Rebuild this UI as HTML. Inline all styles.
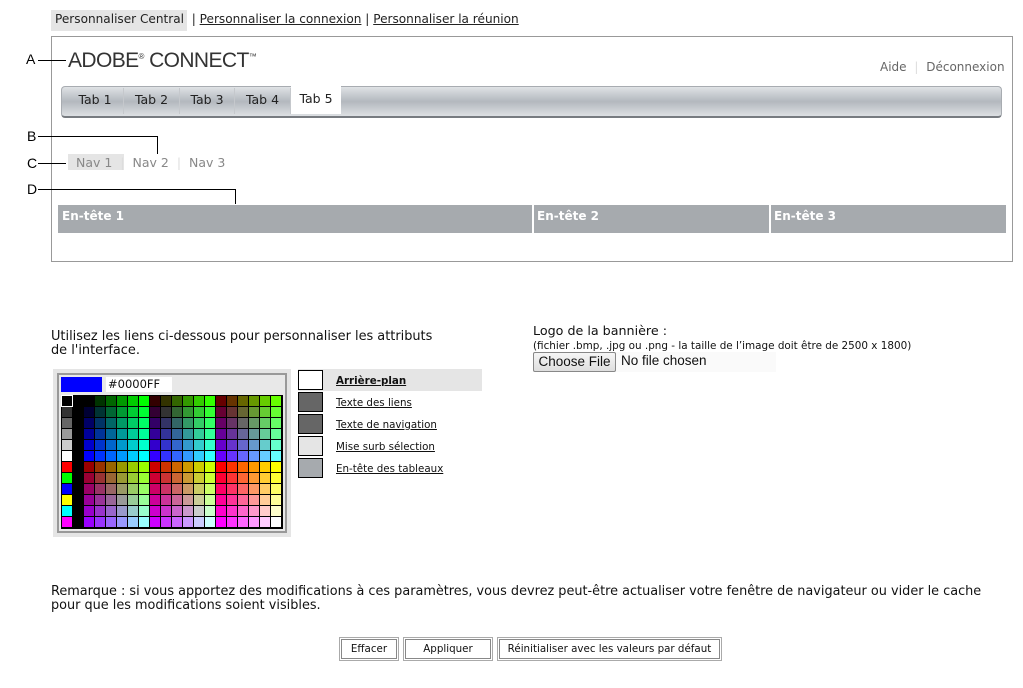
<!DOCTYPE html>
<html><head><meta charset="utf-8"><style>
*{margin:0;padding:0;box-sizing:border-box}
body{width:1023px;height:688px;background:#fff;font-family:"DejaVu Sans","Liberation Sans",sans-serif;color:#000;position:relative;overflow:hidden}
.a{position:absolute;white-space:nowrap}
u{text-decoration:underline}
.lbl{font-family:"Liberation Sans",sans-serif;font-size:14px;color:#000}
.ln{position:absolute;background:#000}
.tab{position:absolute;top:88px;height:26px;font-size:12.5px;line-height:22px;color:#222;text-align:center;border-right:1px solid #c5c8cc}
.sw{position:absolute;left:298px;width:25px;height:20px;border:1px solid #000}
.al{position:absolute;left:336px;font-size:10.3px;color:#111;text-decoration:underline}
.btn{position:absolute;top:637px;height:24px;border:1px solid #aaa;outline:1px solid #888;outline-offset:-3px;background:#fff;font-size:10.3px;line-height:23px;text-align:center;color:#111}
</style></head><body>
<div class="a" style="left:51px;top:10px;width:136px;height:21px;background:#e5e5e5"></div>
<div class="a" style="left:55px;top:12px;font-size:12.1px;color:#222">Personnaliser Central &nbsp;| <u>Personnaliser la connexion</u> | <u>Personnaliser la réunion</u></div>

<div class="a" style="left:51px;top:36px;width:962px;height:226px;border:1px solid #999"></div>
<div class="a" style="left:68px;top:49px;font-family:'Liberation Sans',sans-serif;font-size:21px;color:#333;letter-spacing:-0.6px">ADOBE<sup style="font-size:8px">®</sup> CONNECT<sup style="font-size:8px">™</sup></div>
<div class="a" style="left:880px;top:60px;font-size:12px;color:#666">Aide <span style="color:#ddd;margin:0 4px">|</span> Déconnexion</div>

<div class="a" style="left:61px;top:86px;width:941px;height:32px;border-radius:4px;background:linear-gradient(#dfe2e5,#b3b8be 50%,#dde0e3);border:1px solid #a8acb1;border-bottom:2px solid #777b80"></div>
<div class="tab" style="left:67px;width:57px;line-height:23px">Tab 1</div>
<div class="tab" style="left:124px;width:56px;line-height:23px">Tab 2</div>
<div class="tab" style="left:180px;width:55px;line-height:23px">Tab 3</div>
<div class="tab" style="left:235px;width:56px;line-height:23px">Tab 4</div>
<div class="tab" style="left:291px;top:83px;width:50px;height:31px;background:#fff;line-height:32px;border:none">Tab 5</div>

<div class="a" style="left:68px;top:154px;width:56px;height:16px;background:#e5e5e5"></div>
<div class="a" style="left:76px;top:155px;font-size:12.5px;color:#888">Nav 1 <span style="color:#ddd;margin:0 4px">|</span> Nav 2 <span style="color:#ddd;margin:0 4px">|</span> Nav 3</div>

<div class="a" style="left:58px;top:205px;width:948px;height:28px;background:#a6aaae"></div>
<div class="a" style="left:532px;top:205px;width:2px;height:28px;background:#fff"></div>
<div class="a" style="left:769px;top:205px;width:2px;height:28px;background:#fff"></div>
<div class="a" style="left:62px;top:209px;font-size:12px;font-weight:bold;color:#fff">En-tête 1</div>
<div class="a" style="left:537px;top:209px;font-size:12px;font-weight:bold;color:#fff">En-tête 2</div>
<div class="a" style="left:774px;top:209px;font-size:12px;font-weight:bold;color:#fff">En-tête 3</div>

<div class="a lbl" style="left:26px;top:51px">A</div><div class="ln" style="left:38px;top:60px;width:28px;height:1px"></div>
<div class="a lbl" style="left:27px;top:128px">B</div><div class="ln" style="left:38px;top:136px;width:120px;height:1px"></div><div class="ln" style="left:157px;top:136px;width:1px;height:18px"></div>
<div class="a lbl" style="left:27px;top:155px">C</div><div class="ln" style="left:38px;top:163px;width:28px;height:1px"></div>
<div class="a lbl" style="left:27px;top:181px">D</div><div class="ln" style="left:38px;top:189px;width:198px;height:1px"></div><div class="ln" style="left:235px;top:189px;width:1px;height:15px"></div>

<div class="a" style="left:51px;top:330px;font-size:12.9px;line-height:14px;color:#111">Utilisez les liens ci-dessous pour personnaliser les attributs<br>de l'interface.</div>

<div class="a" style="left:53px;top:369px;width:238px;height:168px;background:#e5e5e5"></div>
<div class="a" style="left:57px;top:373px;width:230px;height:160px;border:2px solid #999;background:#e8e8e8"></div>
<div class="a" style="left:61px;top:377px;width:41px;height:15px;background:#00f"></div>
<div class="a" style="left:106px;top:377px;width:66px;height:15px;background:#fff;font-size:11.5px;line-height:15px;padding-left:2px;color:#111">#0000FF</div>
<div id="g" class="a" style="left:61px;top:395px;width:222px;height:134px;background:#000"></div>

<div class="a" style="left:298px;top:369px;width:184px;height:22px;background:#e5e5e5"></div>
<div class="sw" style="top:370px;background:#fff"></div>
<div class="sw" style="top:392px;background:#666"></div>
<div class="sw" style="top:414px;background:#666"></div>
<div class="sw" style="top:436px;background:#e5e5e5"></div>
<div class="sw" style="top:458px;background:#a6aaae"></div>
<div class="al" style="top:375px;font-weight:bold">Arrière-plan</div>
<div class="al" style="top:397px">Texte des liens</div>
<div class="al" style="top:419px">Texte de navigation</div>
<div class="al" style="top:441px">Mise surb sélection</div>
<div class="al" style="top:463px">En-tête des tableaux</div>

<div class="a" style="left:533px;top:323px;font-size:12.7px;color:#111">Logo de la bannière :</div>
<div class="a" style="left:533px;top:340px;font-size:10.4px;color:#111">(fichier .bmp, .jpg ou .png - la taille de l’image doit être de 2500 x 1800)</div>
<div class="a" style="left:533px;top:352px;width:243px;height:20px;background:#fafafa"></div>
<div class="a" style="left:533px;top:352px;width:83px;height:20px;border:1px solid #888;border-radius:2px;background:linear-gradient(#f6f6f6,#dedede);font-family:'Liberation Sans',sans-serif;font-size:13.5px;line-height:18px;text-align:center;color:#111">Choose File</div>
<div class="a" style="left:621px;top:353px;font-family:'Liberation Sans',sans-serif;font-size:13.5px;color:#111">No file chosen</div>

<div class="a" style="left:51px;top:585px;font-size:12.85px;line-height:14px;color:#111">Remarque : si vous apportez des modifications à ces paramètres, vous devrez peut-être actualiser votre fenêtre de navigateur ou vider le cache<br>pour que les modifications soient visibles.</div>

<div class="btn" style="left:339px;width:60px">Effacer</div>
<div class="btn" style="left:403px;width:90px">Appliquer</div>
<div class="btn" style="left:497px;width:225px">Réinitialiser avec les valeurs par défaut</div>

<script>
var g=document.getElementById('g'),h='',v=['00','33','66','99','cc','ff'];
var c0=['000','333','666','999','ccc','fff','f00','0f0','00f','ff0','0ff','f0f'];
for(var r=0;r<12;r++)for(var c=0;c<20;c++){var col;
if(c==0)col='#'+c0[r];else if(c==1)col='#000';else{var b=Math.floor((c-2)/6),gg=(c-2)%6,rr=r<6?b:b+3,bl=r%6;col='#'+v[rr]+v[gg]+v[bl];}
h+='<div style="position:absolute;left:'+(c*11+1)+'px;top:'+(r*11+1)+'px;width:10px;height:10px;background:'+col+(r==0&&c==0?';outline:1px solid #fff':'')+'"></div>';}
g.innerHTML=h;
</script>
</body></html>
